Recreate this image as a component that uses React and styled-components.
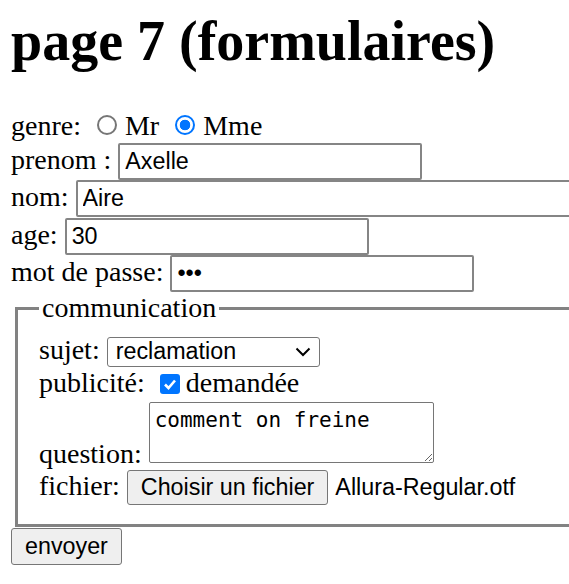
import styled, { createGlobalStyle } from "styled-components";

const GlobalStyle = createGlobalStyle`
  html, body {
    margin: 0;
    padding: 0;
    background: #fff;
    overflow: hidden;
  }
  body {
    font-family: "Liberation Serif", "Times New Roman", serif;
    font-size: 28px;
    color: #000;
  }
`;

const Page = styled.div`
  width: 640px;
  padding: 9px 0 0 11px;
`;

const Title = styled.h1`
  font-size: 56px;
  font-weight: bold;
  line-height: 64px;
  margin: 0 0 37px;
`;

const Form = styled.form`
  display: flex;
  flex-direction: column;
`;

const Row = styled.div`
  display: flex;
  align-items: baseline;
  min-height: ${(p) => (p.$h ? `${p.$h}px` : "auto")};
  white-space: pre;
`;

const Label = styled.span`
  line-height: 32px;
`;

const RadioInput = styled.input`
  appearance: none;
  box-sizing: border-box;
  width: 20px;
  height: 20px;
  margin: 0 8px 0 9px;
  border-radius: 50%;
  border: 2px solid ${(p) => (p.defaultChecked ? "#0075ff" : "#767676")};
  background: ${(p) =>
    p.defaultChecked
      ? "radial-gradient(circle, #0075ff 0 5px, #fff 5.6px)"
      : "#fff"};
`;

const TextInput = styled.input`
  box-sizing: border-box;
  width: ${(p) => p.$w}px;
  height: 37px;
  margin: 0;
  padding: 0 5px;
  border: 2px solid #858585;
  border-radius: 2px;
  background: #fff;
  color: #000;
  font: 23.3px "Liberation Sans", Arial, sans-serif;
  outline: none;
`;

const Fieldset = styled.fieldset`
  margin: 2px 0 0 4px;
  padding: 12px 21px 19px;
  border: 3px solid #828282;
  min-width: 0;
`;

const Legend = styled.legend`
  padding: 0 3px;
  line-height: 28px;
`;

const SelectBox = styled.div`
  box-sizing: border-box;
  display: flex;
  align-items: center;
  justify-content: space-between;
  width: 213px;
  height: 30px;
  padding: 0 8px 0 8px;
  border: 1.5px solid #767676;
  border-radius: 3px;
  background: #fff;
  font: 23.3px "Liberation Sans", Arial, sans-serif;
`;

const CheckBox = styled.span`
  display: inline-flex;
  align-items: center;
  justify-content: center;
  width: 20px;
  height: 20px;
  margin: 0 6px 1px 8px;
  border-radius: 3px;
  background: #0075ff;
`;

const AreaLine = styled.span`
  display: inline-block;
  line-height: 32px;
`;

const TextArea = styled.textarea`
  box-sizing: border-box;
  width: 285px;
  height: 61px;
  margin: 2px 0 0;
  padding: 5px 5px 3px;
  border: 1.5px solid #767676;
  border-radius: 2px;
  font: 21px "DejaVu Sans Mono", "Liberation Mono", monospace;
  line-height: 25px;
  color: #000;
  vertical-align: baseline;
  outline: none;
`;

const Button = styled.button`
  box-sizing: border-box;
  height: ${(p) => p.$h}px;
  margin: 0 ${(p) => p.$mr || 0}px 0 0;
  padding: 0 13px;
  border: 1.5px solid #767676;
  border-radius: 3px;
  background: #efefef;
  color: #000;
  font: 23.3px "Liberation Sans", Arial, sans-serif;
`;

const FileName = styled.span`
  font: 23.3px "Liberation Sans", Arial, sans-serif;
`;

const Submit = styled.div`
  display: flex;
  margin-top: 1px;
`;

export default function App() {
  return (
    <Page>
      <GlobalStyle />
      <Title>page 7 (formulaires)</Title>
      <Form onSubmit={(e) => e.preventDefault()}>
        <Row $h={33}>
          <Label>genre: </Label>
          <RadioInput type="radio" name="genre" />
          <Label>Mr </Label>
          <RadioInput type="radio" name="genre" defaultChecked />
          <Label>Mme</Label>
        </Row>
        <Row $h={37.3}>
          <Label>prenom : </Label>
          <TextInput $w={304} defaultValue="Axelle" />
        </Row>
        <Row $h={37.3}>
          <Label>nom: </Label>
          <TextInput $w={560} defaultValue="Aire" />
        </Row>
        <Row $h={37.3}>
          <Label>age: </Label>
          <TextInput $w={304} defaultValue="30" />
        </Row>
        <Row $h={37.3}>
          <Label>mot de passe: </Label>
          <TextInput $w={304} type="password" defaultValue="abc" />
        </Row>
        <Fieldset>
          <Legend>communication</Legend>
          <Row $h={33}>
            <Label>sujet: </Label>
            <SelectBox>
              <span>reclamation</span>
              <svg width="16" height="10" viewBox="0 0 16 10">
                <polyline
                  points="1.5,1.5 8,8 14.5,1.5"
                  fill="none"
                  stroke="#000"
                  strokeWidth="2"
                />
              </svg>
            </SelectBox>
          </Row>
          <Row $h={33}>
            <Label>publicité: </Label>
            <CheckBox>
              <svg width="16" height="16" viewBox="0 0 16 16">
                <polyline
                  points="3,8.5 6.5,12 13,4.5"
                  fill="none"
                  stroke="#fff"
                  strokeWidth="2.6"
                />
              </svg>
            </CheckBox>
            <Label>demandée</Label>
          </Row>
          <Row>
            <Label>question: </Label>
            <AreaLine>
              <TextArea defaultValue="comment on freine" />
            </AreaLine>
          </Row>
          <Row>
            <Label>fichier: </Label>
            <Button type="button" $h={35} $mr={7}>
              Choisir un fichier
            </Button>
            <FileName>Allura-Regular.otf</FileName>
          </Row>
        </Fieldset>
        <Submit>
          <Button type="submit" $h={37}>
            envoyer
          </Button>
        </Submit>
      </Form>
    </Page>
  );
}
